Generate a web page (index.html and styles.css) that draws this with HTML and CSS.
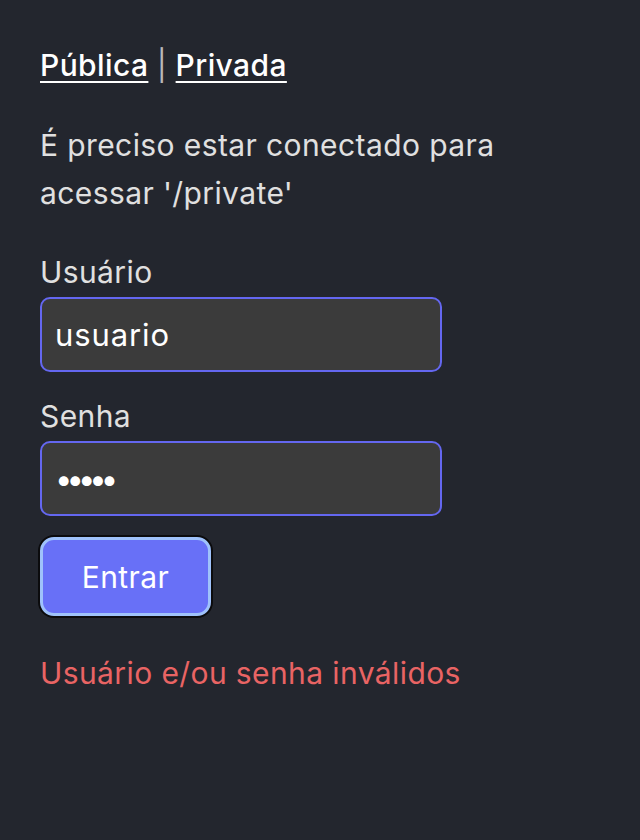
FILE: index.html
```html
<!DOCTYPE html>
<html lang="pt-BR">
<head>
<meta charset="utf-8">
<title>Login</title>
<link rel="stylesheet" href="styles.css">
</head>
<body>
<main class="page">
  <nav class="nav"><a href="#" class="nav-link">Pública</a> <span class="sep">|</span> <a href="#" class="nav-link">Privada</a></nav>
  <p class="notice">É preciso estar conectado para acessar '/private'</p>
  <form class="form">
    <label class="field">
      <span class="label">Usuário</span>
      <input class="input" type="text" value="usuario">
    </label>
    <label class="field">
      <span class="label">Senha</span>
      <input class="input password" type="password" value="12345">
    </label>
    <button type="button" class="btn">Entrar</button>
  </form>
  <p class="error">Usuário e/ou senha inválidos</p>
</main>
</body>
</html>
```
FILE: styles.css
```css
html, body {
  margin: 0;
  padding: 0;
  background: #23262e;
}
body {
  font-family: Inter, "Noto Sans", sans-serif;
  font-size: 30px;
  line-height: 48px;
  letter-spacing: 0.4px;
  color: #e3e3e3;
}
.page {
  padding: 41px 40px;
}
.nav {
  color: #b8b8b8;
  font-weight: 500;
}
.sep {
  font-weight: 400;
}
.nav-link {
  color: #ffffff;
  text-decoration: underline;
  text-decoration-thickness: 2px;
  text-underline-offset: 5px;
}
.notice {
  margin: 32px 0 0;
  width: 500px;
  color: #e0e0e0;
}
.form {
  margin-top: 31px;
  display: flex;
  flex-direction: column;
  align-items: flex-start;
}
.field {
  display: flex;
  flex-direction: column;
  margin-bottom: 20px;
}
.label {
  color: #e0e0e0;
}
.input {
  box-sizing: border-box;
  width: 402px;
  height: 75px;
  margin-top: 1px;
  padding: 0 13px;
  border: 2px solid #6467f0;
  border-radius: 10px;
  background: #3b3b3b;
  color: #ffffff;
  font-family: Inter, "Noto Sans", sans-serif;
  font-size: 31px;
  letter-spacing: 0.9px;
  outline: none;
}
.password {
  letter-spacing: -6px;
}
.btn {
  box-sizing: border-box;
  margin-top: 1px;
  width: 171px;
  height: 79px;
  border: 3px solid #9fc2fb;
  border-radius: 14px;
  box-shadow: 0 0 0 2px #0b0b0d;
  background: #6870f7;
  color: #ffffff;
  font-family: Inter, "Noto Sans", sans-serif;
  font-size: 30px;
  letter-spacing: 0.4px;
  cursor: pointer;
}
.error {
  margin: 33px 0 0;
  color: #e96464;
}
```
